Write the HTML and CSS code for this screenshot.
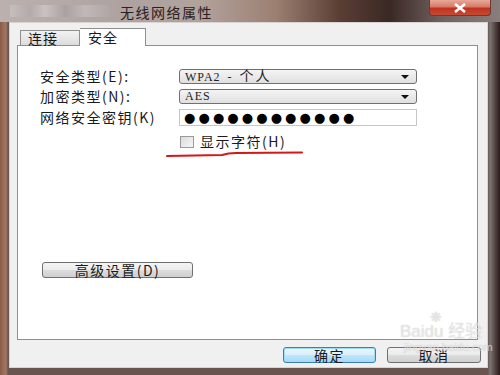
FILE: index.html
```html
<!DOCTYPE html>
<html lang="zh-CN">
  <head>
    <meta charset="UTF-8" />
    <title>无线网络属性</title>
    <link rel="stylesheet" href="styles.css">
  </head>
  <body>
    <div class="window">
      <div class="titlebar">
        <div class="blur-icon"></div>
        <span class="title">无线网络属性</span>
        <div class="close_btn">
          <svg width="14" height="10" viewBox="0 0 14 10">
            <path d="M2 1 L12 9 M12 1 L2 9" stroke="#fff" stroke-width="2.6" />
          </svg>
        </div>
      </div>

      <div class="client">
        <div class="tabs">
          <div class="tab">连接</div>
          <div class="tab active">安全</div>
        </div>

        <div class="panel">
          <div class="form">
            <label>安全类型(E):</label>
            <div class="select">
              <span>WPA2 - <span class="cjk">个人</span></span>
              <span class="arrow"></span>
            </div>

            <label>加密类型(N):</label>
            <div class="select">
              <span>AES</span>
              <span class="arrow"></span>
            </div>

            <label>网络安全密钥(K)</label>
            <div class="key_input">●●●●●●●●●●●●</div>

            <span></span>
            <div class="show_chars">
              <span class="checkbox"></span>
              <span>显示字符(H)</span>
            </div>
          </div>

          <button class="btn adv_btn">高级设置(D)</button>
        </div>

        <div class="actions">
          <button class="btn ok_btn">确定</button>
          <button class="btn">取消</button>
        </div>
      </div>

      <!-- red hand-drawn mark under the checkbox -->
      <svg class="mark" width="500" height="375" viewBox="0 0 500 375">
        <path d="M167 156 L222 155 Q228 153 236 153 L302 152.5" fill="none" stroke="#d41818" stroke-width="2" stroke-linecap="round" />
      </svg>

      <div class="watermark">
        <div class="wm_logo">Bai<span class="paw">❋</span>du 经验</div>
        <div class="wm_url">jingyan.baidu.com</div>
      </div>
    </div>
  </body>
</html>
```

FILE: styles.css
```css
* {
  margin: 0;
  padding: 0;
  box-sizing: border-box;
}

body {
  width: 500px;
  height: 375px;
  overflow: hidden;
  font-family: "Noto Sans CJK SC", "DejaVu Sans", sans-serif;
  font-size: 13px;
  color: #1a1a1a;
}

.window {
  width: 500px;
  height: 375px;
  position: relative;
  display: flex;
  flex-direction: column;
  background: linear-gradient(to right, #8a5a46 0, #a07a66 6px, #6a5450 8px, #6a5450 488px, #7c7676 490px, #4a3a38 496px, #2a1a1a 500px);
  overflow: hidden;
}

.titlebar {
  height: 22px;
  display: flex;
  align-items: center;
  background: linear-gradient(to right, #bdb1b0 0%, #aea2a1 25%, #b2a29c 40%, #9c8072 55%, #5a3e34 68%, #3a2824 78%, #6e605e 88%, #8a7e7c 100%);

  .blur-icon {
    width: 100px;
    height: 12px;
    margin-left: 10px;
    background: linear-gradient(to right, #c8c0c0 0, #b4a9a9 20px, #cfc7c6 35px, #a99f9f 55px, #c4bcbb 75px, #b1a6a6 100px);
    opacity: 0.8;
  }

  .title {
    margin-left: 10px;
    font-size: 14px;
    letter-spacing: 1.5px;
    color: #2a2020;
    padding-top: 2px;
  }

  .close_btn {
    margin-left: auto;
    margin-right: 9px;
    align-self: flex-start;
    width: 62px;
    height: 16px;
    border: 1px solid #6a3a34;
    border-top: none;
    border-radius: 0 0 4px 4px;
    background: linear-gradient(to bottom, #e8a898 0%, #d87a68 45%, #c0321e 55%, #c84a34 100%);
    display: flex;
    justify-content: center;
    align-items: center;
  }
}

.client {
  flex: 1;
  margin: 0 12px 7px 9px;
  background-color: #f0f0f0;
  border: 1px solid #d8d4d4;
  padding: 5px 8px 0 7px;
  display: flex;
  flex-direction: column;
}

.tabs {
  display: flex;
  align-items: flex-end;
  height: 17px;
  padding-left: 3px;
  position: relative;
  z-index: 1;

  .tab {
    height: 15px;
    width: 60px;
    padding-left: 7px;
    font-size: 14px;
    line-height: 15px;
    letter-spacing: 1px;
    border: 1px solid #8e8f8f;
    border-bottom: none;
    background: linear-gradient(to bottom, #f2f2f2, #dcdcdc);
  }

  .tab.active {
    height: 18px;
    width: 66px;
    margin-bottom: -1px;
    padding-left: 8px;
    border-left: none;
    background: #fff;
    line-height: 16px;
  }
}

.panel {
  height: 295px;
  margin-right: 1px;
  background-color: #fff;
  border: 1px solid #8e8f8f;
  padding: 23px 0 0 22px;
  display: flex;
  flex-direction: column;
}

.form {
  display: grid;
  grid-template-columns: 139px 238px;
  align-items: center;
  row-gap: 5px;
  line-height: 15px;

  label {
    font-size: 14px;
    line-height: 15px;
    letter-spacing: 1.5px;
    white-space: nowrap;
  }

  .select {
    height: 15px;
    border: 1px solid #707070;
    border-radius: 3px;
    background: linear-gradient(to bottom, #f4f4f4, #e0e0e0);
    display: flex;
    align-items: center;
    padding: 0 7px 0 5px;
    font-family: "Liberation Serif", "Noto Sans CJK SC", serif;
    font-size: 12px;
    line-height: 13px;
    letter-spacing: 1px;
    word-spacing: 3px;
    color: #222;

    .cjk {
      font-family: "Noto Sans CJK SC", sans-serif;
      font-size: 14px;
      letter-spacing: 2px;
    }

    .arrow {
      margin-left: auto;
      width: 0;
      height: 0;
      border-left: 4px solid transparent;
      border-right: 4px solid transparent;
      border-top: 4px solid #111;
    }
  }

  .key_input {
    height: 17px;
    border: 1px solid #c6c6c6;
    background: #fff;
    padding-left: 4px;
    font-family: "DejaVu Sans", sans-serif;
    font-size: 13px;
    line-height: 15px;
    letter-spacing: 3.1px;
    color: #000;
  }

  .show_chars {
    margin-top: 3px;
    display: flex;
    align-items: center;
    gap: 6px;
    font-size: 14px;
    line-height: 15px;
    letter-spacing: 1.5px;

    .checkbox {
      width: 14px;
      height: 12px;
      margin-left: 1px;
      border: 1px solid #9a9a9a;
      background: linear-gradient(135deg, #dcdcdc, #f6f6f6);
    }
  }
}

.btn {
  height: 16px;
  border: 1px solid #707070;
  border-radius: 3px;
  background: linear-gradient(to bottom, #f4f4f4 0%, #ebebeb 50%, #dddddd 51%, #cfcfcf 100%);
  font-family: "Noto Sans CJK SC", sans-serif;
  font-size: 14px;
  letter-spacing: 1.5px;
  line-height: 14px;
  color: #1a1a1a;
}

.adv_btn {
  width: 151px;
  margin: 113px 0 0 2px;
}

.actions {
  display: flex;
  justify-content: flex-end;
  gap: 11px;
  margin-top: 7px;
  margin-right: -2px;

  .btn {
    width: 94px;
  }

  .ok_btn {
    width: 93px;
    border-color: #3c7fb1;
    background: linear-gradient(to bottom, #eaf6fd 0%, #d9f0fc 50%, #bee6fd 51%, #a7d9f5 100%);
    box-shadow: inset 0 0 0 1px #9edcf6;
  }
}

.mark {
  position: absolute;
  top: 0;
  left: 0;
  pointer-events: none;
}

.watermark {
  position: absolute;
  left: 400px;
  top: 322px;
  color: rgba(255, 255, 255, 0.55);
  text-shadow: 0 0 1px rgba(150, 150, 150, 0.6);
  pointer-events: none;

  .wm_logo {
    font-family: "Liberation Sans", "Noto Sans CJK SC", sans-serif;
    font-size: 17px;
    line-height: 19px;
    position: relative;
  }

  .paw {
    position: absolute;
    left: 30px;
    top: -14px;
    font-size: 14px;
  }

  .wm_url {
    font-family: "Liberation Sans", sans-serif;
    font-size: 11px;
    line-height: 13px;
    margin-left: 4px;
  }
}
```
